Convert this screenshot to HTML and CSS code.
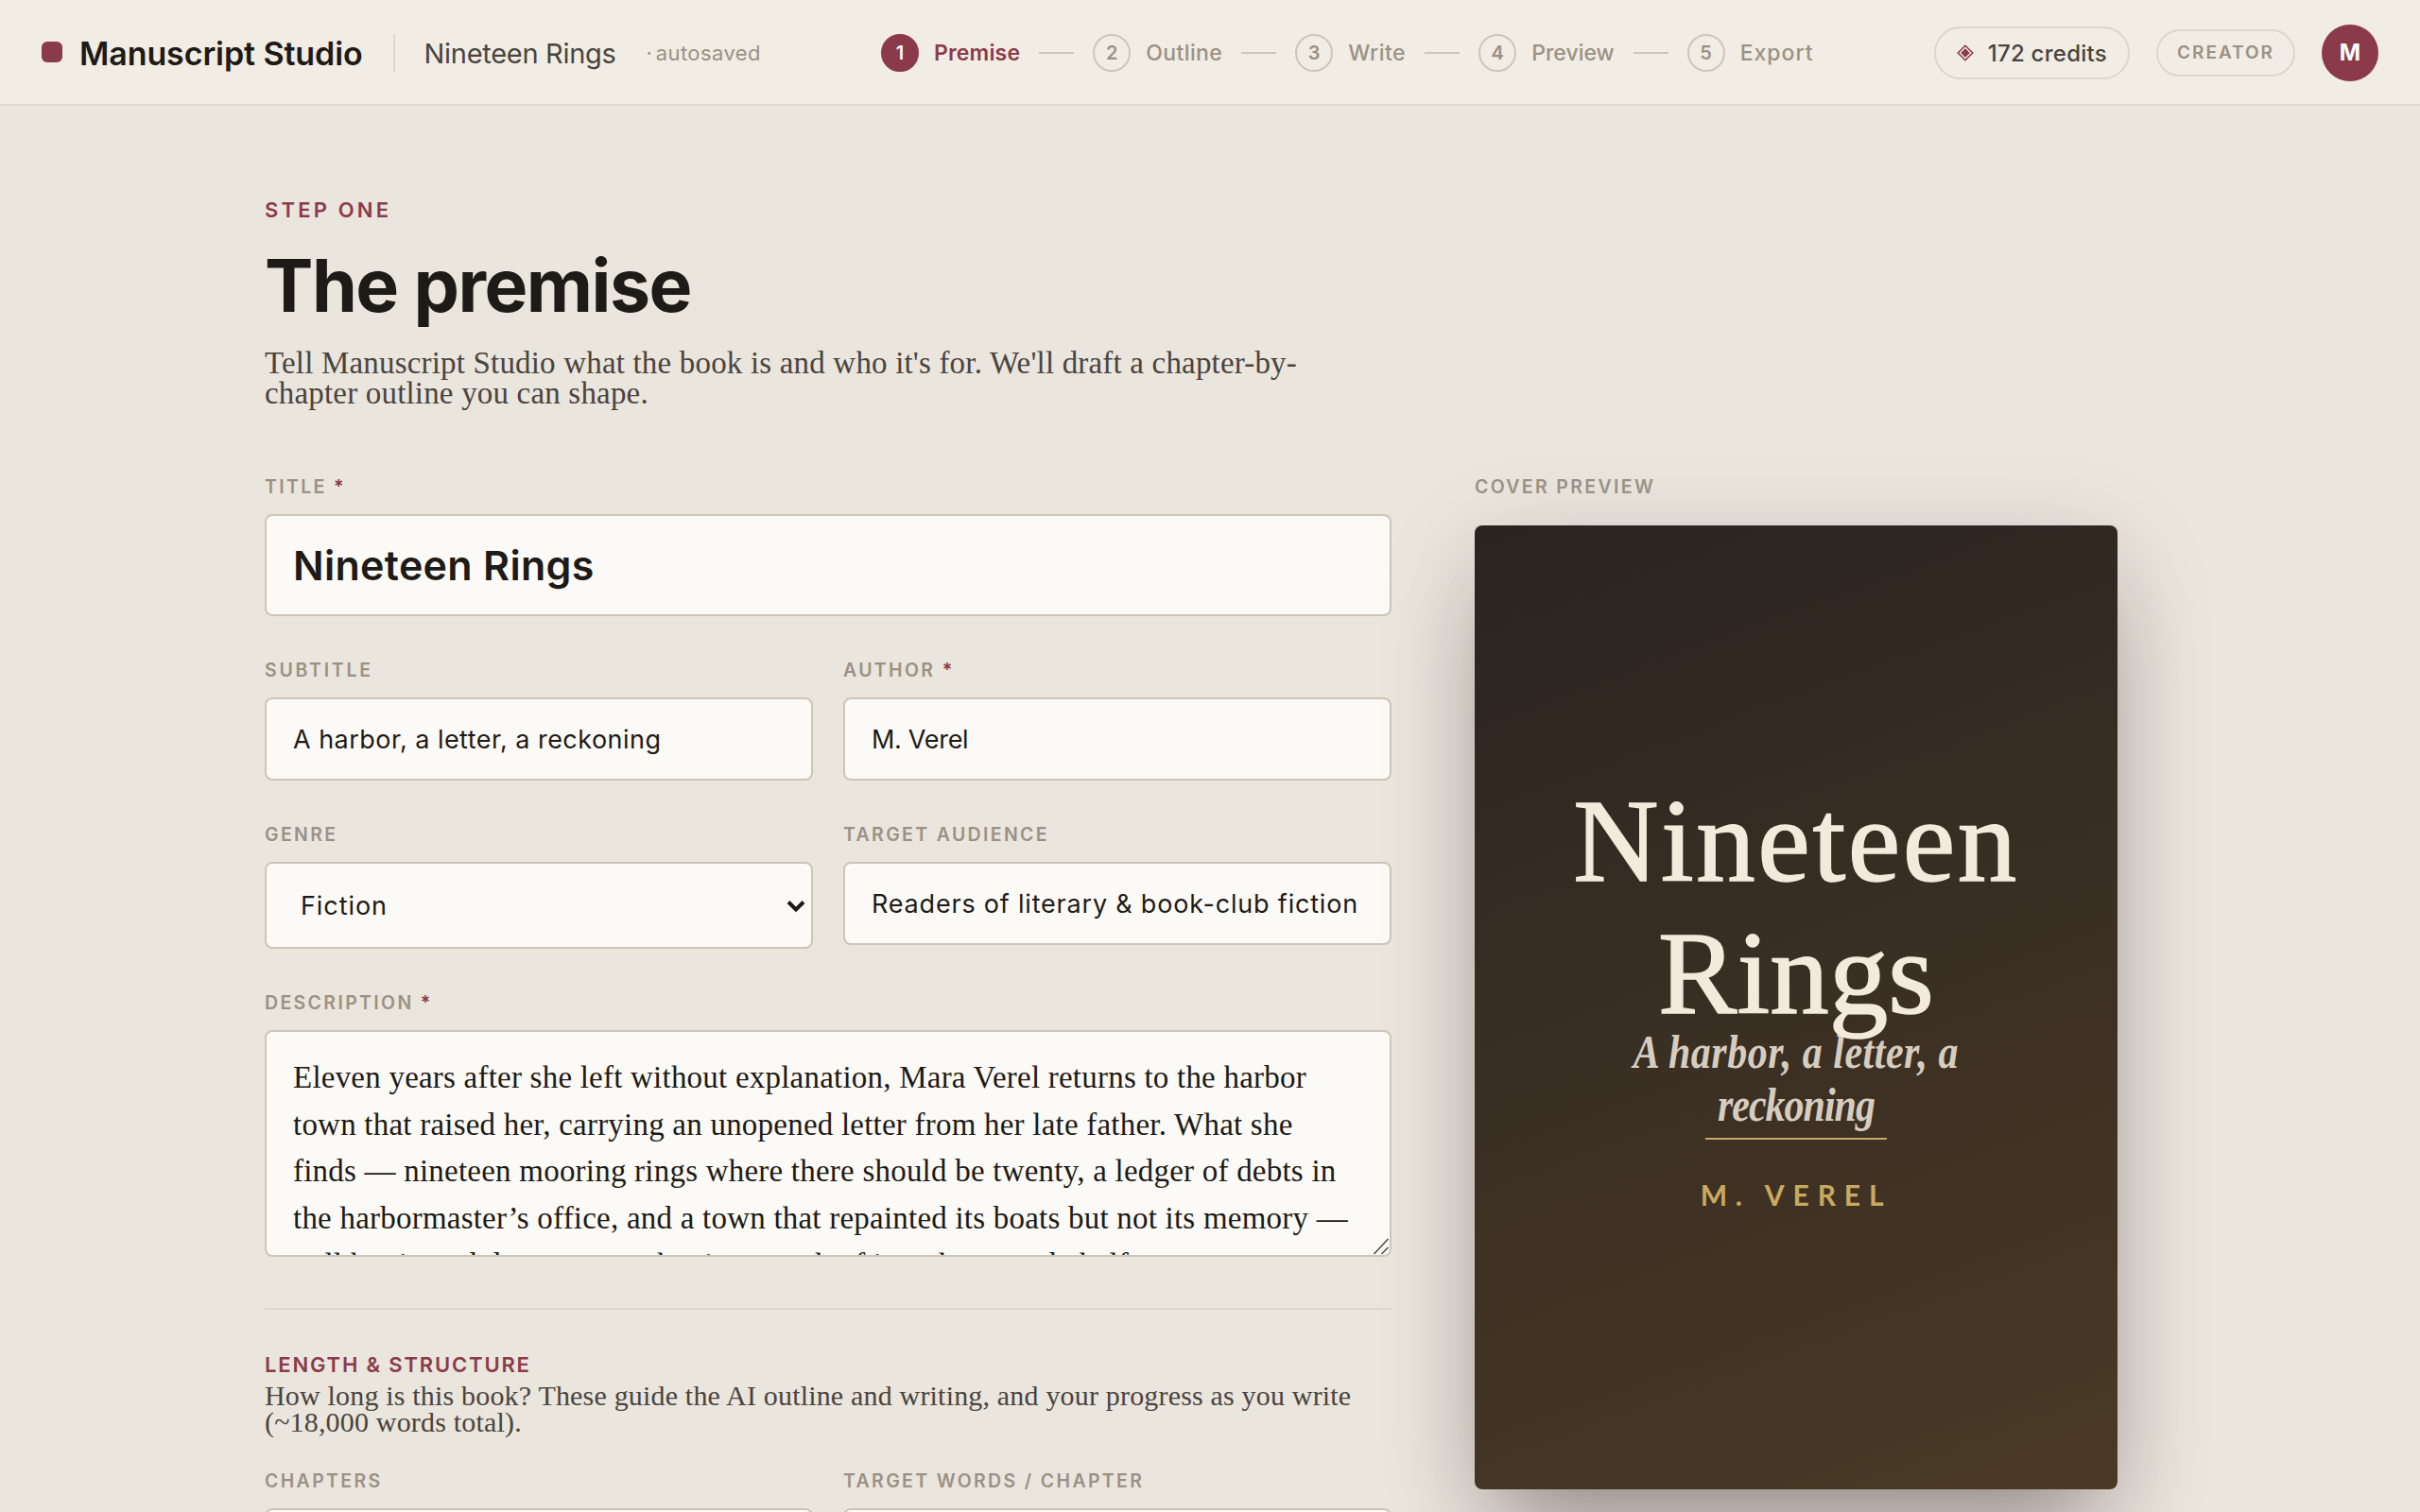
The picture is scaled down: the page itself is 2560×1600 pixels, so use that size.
FILE: index.html
```
<!DOCTYPE html>
<html lang="en">
<head>
    <meta charset="UTF-8">
    <meta name="viewport" content="width=device-width, initial-scale=1.0">
    <title>Manuscript Studio</title>
    <link rel="stylesheet" href="styles.css">
</head>
<body>
    <header class="topbar">
        <div class="brand">
            <span class="logo"></span>
            <span class="brand-name">Manuscript Studio</span>
            <span class="divider"></span>
            <span class="book-name">Nineteen Rings</span>
            <span class="saved">· autosaved</span>
        </div>
        <nav class="steps">
            <a class="step active"><span class="num">1</span><span class="s-premise">Premise</span></a>
            <span class="dash"></span>
            <a class="step"><span class="num">2</span><span class="s-outline">Outline</span></a>
            <span class="dash"></span>
            <a class="step"><span class="num">3</span><span class="s-write">Write</span></a>
            <span class="dash"></span>
            <a class="step"><span class="num">4</span><span class="s-preview">Preview</span></a>
            <span class="dash"></span>
            <a class="step"><span class="num">5</span><span class="s-export">Export</span></a>
        </nav>
        <div class="account">
            <div class="credits">
                <svg width="18" height="18" viewBox="0 0 18 18">
                    <path d="M9 1.2 16.8 9 9 16.8 1.2 9Z" fill="none" stroke="#8b3a4a" stroke-width="1.5"/>
                    <path d="M9 4.2 13.8 9 9 13.8 4.2 9Z" fill="#8b3a4a"/>
                </svg>
                <span>172 credits</span>
            </div>
            <div class="plan">CREATOR</div>
            <div class="avatar">M</div>
        </div>
    </header>

    <main class="page">
        <p class="eyebrow">STEP ONE</p>
        <h1>The premise</h1>
        <p class="lead">Tell Manuscript Studio what the book is and who it's for. We'll draft a chapter-by-<br>chapter outline you can shape.</p>

        <div class="columns">
            <form class="form">
                <div class="field">
                    <label for="title">TITLE <span class="req">*</span></label>
                    <input class="title-input" type="text" id="title" value="Nineteen Rings">
                </div>
                <div class="row">
                    <div class="field">
                        <label class="l-subtitle" for="subtitle">SUBTITLE</label>
                        <input class="i-subtitle" type="text" id="subtitle" value="A harbor, a letter, a reckoning">
                    </div>
                    <div class="field">
                        <label for="author">AUTHOR <span class="req">*</span></label>
                        <input class="i-author" type="text" id="author" value="M. Verel">
                    </div>
                </div>
                <div class="row">
                    <div class="field">
                        <label for="genre">GENRE</label>
                        <div class="select">
                            <select id="genre">
                                <option>Fiction</option>
                            </select>
                            <svg class="chevron" width="20" height="14" viewBox="0 0 20 14">
                                <path d="M2 2.5 10 10.5 18 2.5" fill="none" stroke="#1e1a17" stroke-width="4"/>
                            </svg>
                        </div>
                    </div>
                    <div class="field">
                        <label for="audience">TARGET AUDIENCE</label>
                        <input class="i-audience" type="text" id="audience" value="Readers of literary &amp; book-club fiction">
                    </div>
                </div>
                <div class="field">
                    <label for="description">DESCRIPTION <span class="req">*</span></label>
                    <div class="textarea">
                        <textarea id="description">Eleven years after she left without explanation, Mara Verel returns to the harbor
town that raised her, carrying an unopened letter from her late father. What she
finds — nineteen mooring rings where there should be twenty, a ledger of debts in
the harbormaster’s office, and a town that repainted its boats but not its memory —
pull her in and down to a reckoning, much of it on her own behalf.</textarea>
                        <svg class="grip" width="18" height="18" viewBox="0 0 18 18">
                            <path d="M1.5 17 16.5 1M9.5 17 16.5 10" fill="none" stroke="#4a4742" stroke-width="1.5"/>
                        </svg>
                    </div>
                </div>

                <section class="length">
                    <h2>LENGTH &amp; STRUCTURE</h2>
                    <p>How long is this book? These guide the AI outline and writing, and your progress as you write<br>(~18,000 words total).</p>
                    <div class="row">
                        <div class="field">
                            <label for="chapters">CHAPTERS</label>
                            <input type="text" id="chapters">
                        </div>
                        <div class="field">
                            <label for="words">TARGET WORDS / CHAPTER</label>
                            <input type="text" id="words">
                        </div>
                    </div>
                </section>
            </form>

            <aside class="preview">
                <div class="preview-label">COVER PREVIEW</div>
                <div class="cover">
                    <div class="cover-title">
                        <span class="line-one">Nineteen</span>
                        <span class="line-two">Rings</span>
                    </div>
                    <div class="cover-subtitle">
                        <span class="line-one">A harbor, a letter, a</span>
                        <span class="line-two">reckoning</span>
                    </div>
                    <div class="cover-rule"></div>
                    <div class="cover-author">M. VEREL</div>
                </div>
            </aside>
        </div>
    </main>
</body>
</html>
```

FILE: styles.css
```
* {
    box-sizing: border-box;
}
body {
    margin: 0;
    height: 100vh;
    overflow: hidden;
    font-family: Inter, sans-serif;
    background-color: #eae5dd;
    color: #1e1a17;
}
h1, h2, p {
    margin: 0;
}

/* Top bar */
.topbar {
    display: flex;
    align-items: center;
    justify-content: space-between;
    height: 112px;
    padding: 2px 44px 0;
    background-color: #f1ece4;
    border-bottom: 2px solid #dbd6ce;
}
.brand, .steps, .step, .account, .credits {
    display: flex;
    align-items: center;
}
.logo {
    width: 22px;
    height: 22px;
    margin: -2px 18px 0 0;
    border-radius: 6px;
    background-color: #8b3a4a;
}
.brand-name {
    font-size: 34px;
    font-weight: 600;
    letter-spacing: -0.1px;
}
.divider {
    width: 2px;
    height: 40px;
    margin: 0 31px 0 32px;
    background-color: #dbd6ce;
}
.book-name {
    margin-right: 32px;
    font-size: 29px;
    letter-spacing: -0.3px;
    color: #4a443e;
}
.saved {
    font-size: 22px;
    word-spacing: -3px;
    letter-spacing: 0.4px;
    color: #9a9185;
}
.steps {
    gap: 20px;
}
.step {
    gap: 16px;
    font-size: 23px;
    font-weight: 500;
    color: #9a9185;
}
.num {
    display: flex;
    align-items: center;
    justify-content: center;
    width: 40px;
    height: 40px;
    border: 2px solid #cfc6bb;
    border-radius: 50%;
    font-size: 20px;
    font-weight: 600;
}
.step.active {
    color: #8b3a4a;
    font-weight: 600;
}
.active .num {
    background-color: #8b3a4a;
    border-color: #8b3a4a;
    color: #fff;
}
.dash {
    width: 37px;
    height: 2px;
    background-color: #cfc6b6;
}
.s-premise {
    letter-spacing: 0.16px;
}
.s-outline {
    letter-spacing: 0.4px;
}
.s-write {
    letter-spacing: 0.5px;
}
.s-export {
    letter-spacing: 1px;
}
.credits {
    gap: 15px;
    height: 56px;
    padding: 0 22px;
    border: 2px solid #dbd6ce;
    border-radius: 28px;
    font-size: 24px;
    font-weight: 500;
    letter-spacing: 0.26px;
    color: #4a443e;
}
.plan {
    height: 50px;
    margin: 0 28px;
    padding: 0 20px;
    border: 2px solid #dbd6ce;
    border-radius: 25px;
    font-size: 19px;
    font-weight: 600;
    line-height: 46px;
    letter-spacing: 2px;
    color: #9a9185;
}
.avatar {
    width: 60px;
    height: 60px;
    border-radius: 50%;
    background-color: #8b3a4a;
    color: #fff;
    font-size: 24px;
    font-weight: 700;
    line-height: 60px;
    text-align: center;
}

/* Page heading */
.page {
    width: 1960px;
    margin-left: 280px;
    padding-top: 94px;
}
.eyebrow {
    margin-bottom: 20px;
    font-size: 22px;
    font-weight: 600;
    line-height: 32px;
    letter-spacing: 3.17px;
    color: #8b3a4a;
}
h1 {
    margin-bottom: 22px;
    font-size: 77px;
    font-weight: 700;
    line-height: 88px;
    letter-spacing: -1.5px;
}
.lead {
    font-family: "Liberation Serif", serif;
    font-size: 33px;
    line-height: 32px;
    letter-spacing: 0.18px;
    color: #4a443e;
}
.columns {
    display: grid;
    grid-template-columns: 1192px 680px;
    gap: 88px;
    margin-top: 71px;
}

/* Form */
.row {
    display: grid;
    grid-template-columns: 1fr 1fr;
    gap: 32px;
}
.field {
    margin-bottom: 45px;
}
label, .preview-label {
    display: block;
    margin-bottom: 17px;
    font-size: 19.5px;
    font-weight: 600;
    line-height: 24px;
    letter-spacing: 2.35px;
    color: #9a9185;
}
.l-subtitle {
    letter-spacing: 2.75px;
}
.req {
    color: #8b3a4a;
}
input, select, textarea {
    display: block;
    width: 100%;
    height: 88px;
    margin: 0;
    padding: 0 28px;
    border: 2px solid #cdc5b8;
    border-radius: 8px;
    background-color: #fcfaf6;
    color: #1e1a17;
    font-family: Inter, sans-serif;
    font-size: 27px;
}
.title-input {
    height: 108px;
    font-size: 43px;
    font-weight: 600;
    letter-spacing: 0.3px;
}
.i-subtitle {
    letter-spacing: 0.47px;
}
.i-author {
    letter-spacing: -0.3px;
}
.i-audience {
    letter-spacing: 0.8px;
}
.select, .textarea {
    position: relative;
}
select {
    height: 92px;
    padding-left: 36px;
    appearance: none;
    letter-spacing: 0.93px;
}
.chevron {
    position: absolute;
    top: 40px;
    right: 8px;
}
textarea {
    height: 240px;
    padding: 24px 28px 0;
    overflow: hidden;
    resize: none;
    white-space: pre;
    font-family: "Liberation Serif", serif;
    font-size: 33px;
    line-height: 49.6px;
    letter-spacing: 0.22px;
}
.grip {
    position: absolute;
    right: 2px;
    bottom: 2px;
}
.length {
    margin-top: 54px;
    padding-top: 44px;
    border-top: 2px solid #dbd6ce;
}
h2 {
    margin-bottom: 5px;
    font-size: 22px;
    font-weight: 600;
    line-height: 28px;
    letter-spacing: 1.83px;
    color: #8b3a4a;
}
.length p {
    margin-bottom: 36px;
    font-family: "Liberation Serif", serif;
    font-size: 30px;
    line-height: 28px;
    letter-spacing: 0.18px;
    color: #4a443e;
}

/* Cover */
.preview-label {
    margin-bottom: 29px;
}
.cover {
    display: flex;
    flex-direction: column;
    align-items: center;
    height: 1020px;
    padding-top: 264px;
    border-radius: 8px;
    background: linear-gradient(160deg, #2a2420 0%, #3a2f23 50%, #4a3926 100%);
    box-shadow: 0 60px 96px -30px rgba(42, 20, 28, 0.38), 0 24px 110px rgba(42, 20, 28, 0.14);
    font-family: "Liberation Serif", serif;
    text-align: center;
}
.cover-title, .cover-subtitle {
    display: flex;
    flex-direction: column;
    align-items: center;
}
/* keeps the descenders of the title above the subtitle */
.cover-title {
    position: relative;
    z-index: 1;
    font-size: 125px;
    line-height: 140px;
    color: #f3eadc;
    -webkit-text-stroke: 1.5px #f3eadc;
}
.cover-title .line-one {
    letter-spacing: 2.55px;
}
.cover-subtitle {
    margin-top: -15px;
    font-size: 50px;
    font-style: italic;
    font-weight: 700;
    line-height: 56px;
    color: #d6cdc0;
    transform: scaleX(0.84);
}
.cover-subtitle .line-one {
    letter-spacing: 0.6px;
}
.cover-subtitle .line-two {
    letter-spacing: -1.2px;
}
.cover-rule {
    width: 192px;
    height: 2px;
    margin: 7px 0 38px;
    background-color: #c9a961;
}
.cover-author {
    font-family: Lato, sans-serif;
    font-size: 30px;
    font-weight: 700;
    line-height: 40px;
    letter-spacing: 8.86px;
    color: #c9a961;
}
```
